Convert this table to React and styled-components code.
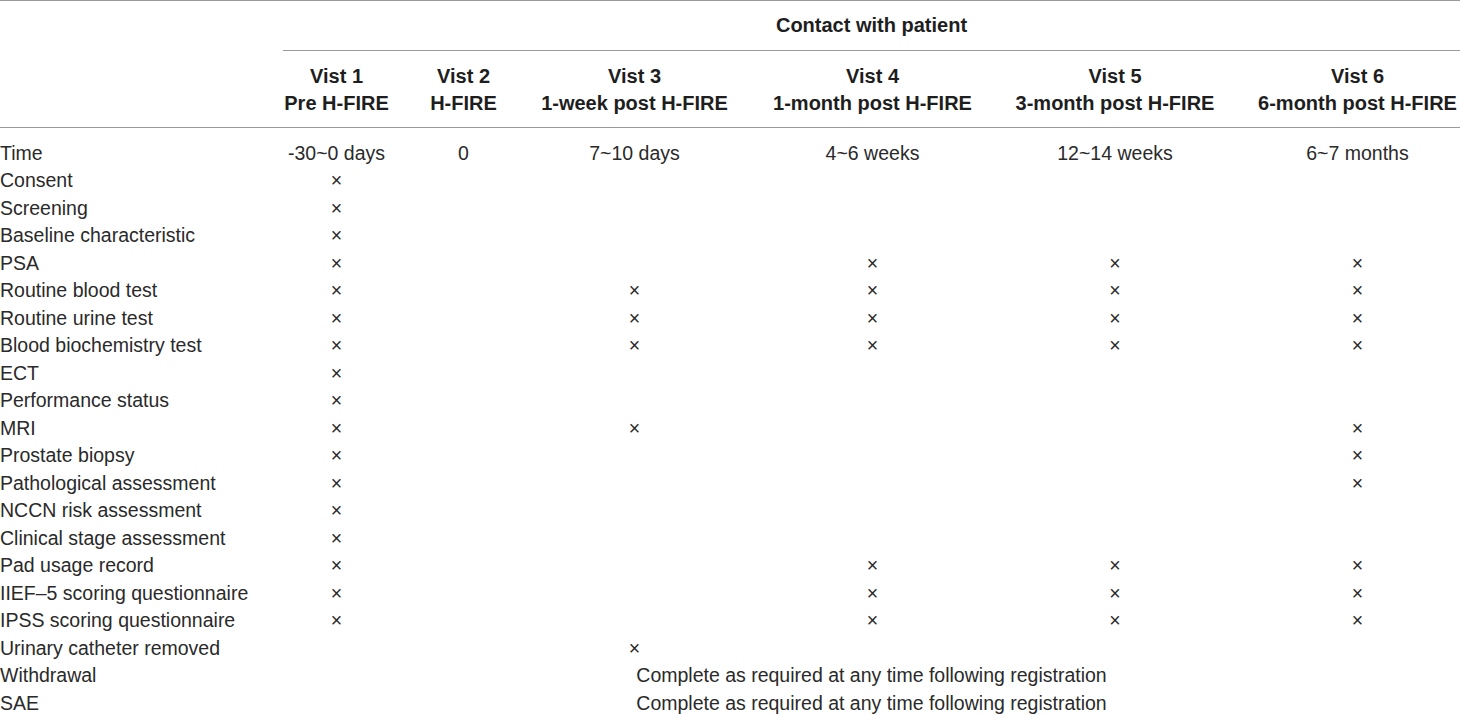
import styled, { createGlobalStyle } from 'styled-components';

const GlobalStyle = createGlobalStyle`
  body {
    margin: 0;
    background: #ffffff;
    font-family: "Liberation Sans", Arial, Helvetica, sans-serif;
    color: #222;
  }
`;

const COLUMNS = '263px 147px 107px 235px 241px 244px 223px';
const X = '×';
const LATER = 'Complete as required at any time following registration';

const visits = [
  ['Vist 1', 'Pre H-FIRE'],
  ['Vist 2', 'H-FIRE'],
  ['Vist 3', '1-week post H-FIRE'],
  ['Vist 4', '1-month post H-FIRE'],
  ['Vist 5', '3-month post H-FIRE'],
  ['Vist 6', '6-month post H-FIRE'],
];

// which visits (1..6) get a cross
const rows = [
  ['Consent', [1]],
  ['Screening', [1]],
  ['Baseline characteristic', [1]],
  ['PSA', [1, 4, 5, 6]],
  ['Routine blood test', [1, 3, 4, 5, 6]],
  ['Routine urine test', [1, 3, 4, 5, 6]],
  ['Blood biochemistry test', [1, 3, 4, 5, 6]],
  ['ECT', [1]],
  ['Performance status', [1]],
  ['MRI', [1, 3, 6]],
  ['Prostate biopsy', [1, 6]],
  ['Pathological assessment', [1, 6]],
  ['NCCN risk assessment', [1]],
  ['Clinical stage assessment', [1]],
  ['Pad usage record', [1, 4, 5, 6]],
  ['IIEF–5 scoring questionnaire', [1, 4, 5, 6]],
  ['IPSS scoring questionnaire', [1, 4, 5, 6]],
  ['Urinary catheter removed', [3]],
];

const times = ['-30~0 days', '0', '7~10 days', '4~6 weeks', '12~14 weeks', '6~7 months'];

const App = () => {
  return (
    <>
      <GlobalStyle />
      <Schedule>
        <Head>
          <span />
          <GroupCell>Contact with patient</GroupCell>
          <HeadCell />
          {visits.map(([title, sub], i) => (
            <HeadCell key={title} $last={i === visits.length - 1}>
              {title}
              <br />
              {sub}
            </HeadCell>
          ))}
        </Head>

        <Body>
          <Label>Time</Label>
          {times.map((t, i) => (
            <Cell key={t} $last={i === times.length - 1}>{t}</Cell>
          ))}

          {rows.map(([label, marks]) => (
            <Row key={label} label={label} marks={marks} />
          ))}

          <Label>Withdrawal</Label>
          <SpanCell>{LATER}</SpanCell>
          <Label>SAE</Label>
          <SpanCell>{LATER}</SpanCell>
        </Body>
      </Schedule>
    </>
  );
};

const Row = ({ label, marks }) => (
  <>
    <Label>{label}</Label>
    {[1, 2, 3, 4, 5, 6].map((v) => (
      <Cell key={v} $last={v === 6}>{marks.includes(v) ? X : ''}</Cell>
    ))}
  </>
);

const Schedule = styled.div`
  width: 1460px;
  border-top: 1px solid #9a9a9a;
  font-size: 19.5px;
`;

const Head = styled.div`
  display: grid;
  grid-template-columns: ${COLUMNS};
  font-weight: bold;
  font-size: 20px;
  color: #1e1e1e;
`;

const GroupCell = styled.div`
  grid-column: 2 / -1;
  margin-left: 20px;
  padding: 11px 0 10px;
  line-height: 27.5px;
  text-align: center;
  border-bottom: 1px solid #9a9a9a;
`;

const HeadCell = styled.div`
  padding: 12px ${(p) => (p.$last ? '2px' : '0')} 10px ${(p) => (p.$last ? '20px' : '0')};
  line-height: 27px;
  text-align: center;
  white-space: nowrap;
  border-bottom: 1px solid #9a9a9a;
`;

const Body = styled.div`
  display: grid;
  grid-template-columns: ${COLUMNS};
  grid-auto-rows: 27.5px;
  padding-top: 12px;
  line-height: 27.5px;
  color: #2a2a2a;
`;

const Label = styled.div`
  white-space: nowrap;
`;

const Cell = styled.div`
  text-align: center;
  white-space: nowrap;
  padding: 0 ${(p) => (p.$last ? '2px' : '0')} 0 ${(p) => (p.$last ? '20px' : '0')};
`;

const SpanCell = styled.div`
  grid-column: 2 / -1;
  padding-left: 20px;
  text-align: center;
  white-space: nowrap;
`;

export default App;
